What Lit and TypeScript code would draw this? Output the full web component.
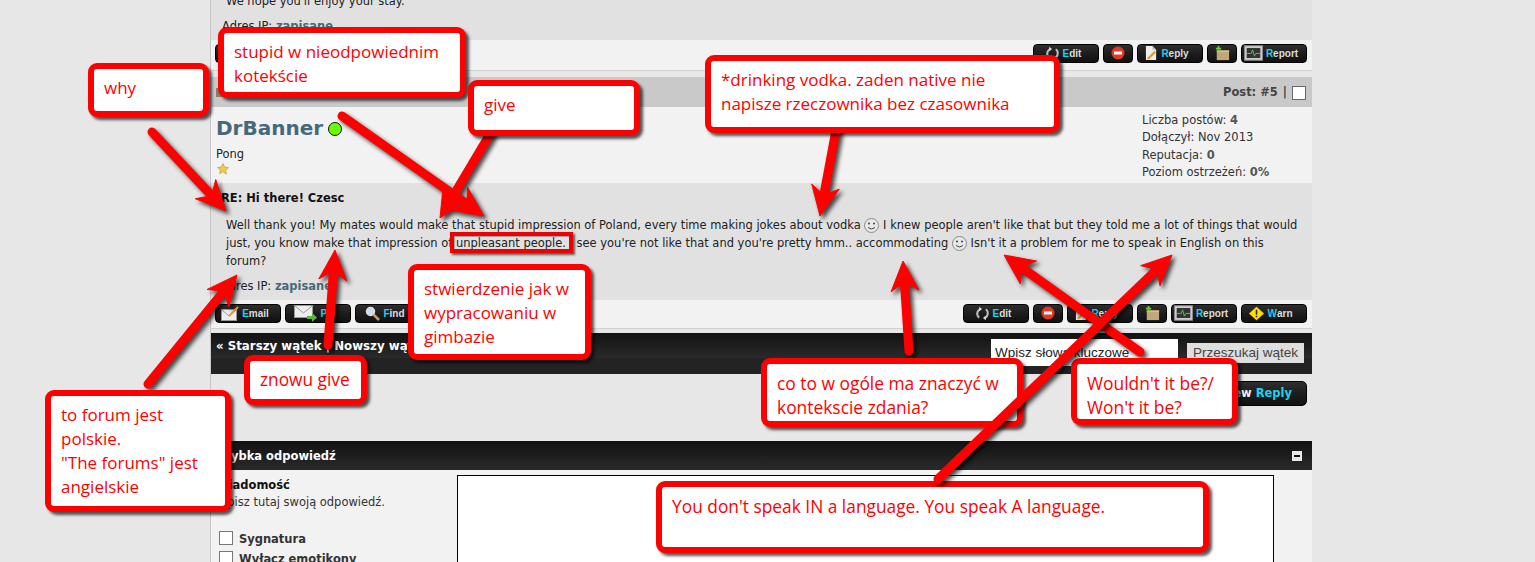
import { LitElement, html, css, svg } from "lit";
import { customElement } from "lit/decorators.js";

type Arrow = [number, number, number, number];
type Note = { x: number; y: number; w: number; h: number; fs?: number; lines: string[] };

const NOTES: Note[] = [
  { x: 88, y: 63, w: 121, h: 54, lines: ["why"] },
  { x: 218, y: 27, w: 248, h: 71, lines: ["stupid w nieodpowiednim", "kotekście"] },
  { x: 468, y: 80, w: 172, h: 56, lines: ["give"] },
  { x: 705, y: 55, w: 355, h: 78, lines: ["*drinking vodka. zaden native nie", "napisze rzeczownika bez czasownika"] },
  { x: 408, y: 264, w: 183, h: 96, lines: ["stwierdzenie jak w", "wypracowaniu w", "gimbazie"] },
  { x: 244, y: 355, w: 123, h: 50, fs: 17.3, lines: ["znowu give"] },
  { x: 45, y: 390, w: 186, h: 122, lines: ["to forum jest", "polskie.", "\"The forums\" jest", "angielskie"] },
  { x: 761, y: 358, w: 262, h: 69, fs: 17.4, lines: ["co to w ogóle ma znaczyć w", "kontekscie zdania?"] },
  { x: 1071, y: 358, w: 167, h: 67, fs: 17.4, lines: ["Wouldn't it be?/", "Won't it be?"] },
  { x: 656, y: 481, w: 553, h: 72, fs: 17.35, lines: ["You don't speak IN a language. You speak A language."] },
];

const UNDER: Arrow[] = [
  [152, 132, 226, 211],
  [490, 134, 440, 218],
  [342, 116, 484, 216],
  [836, 130, 820, 216],
  [328, 345, 335, 250],
  [148, 384, 237, 275],
  [909, 351, 903, 261],
  [1140, 352, 1004, 255],
];
const OVER: Arrow[] = [[938, 479, 1172, 255]];

function arrow([x1, y1, x2, y2]: Arrow) {
  const dx = x2 - x1;
  const dy = y2 - y1;
  const d = Math.hypot(dx, dy);
  const ux = dx / d;
  const uy = dy / d;
  const L = 30;
  const N = 21;
  const H = 14;
  const bx = x2 - ux * L;
  const by = y2 - uy * L;
  const nx = x2 - ux * N;
  const ny = y2 - uy * N;
  const pts = `${x2},${y2} ${bx - uy * H},${by + ux * H} ${nx},${ny} ${bx + uy * H},${by - ux * H}`;
  return svg`<g><line x1=${x1} y1=${y1} x2=${nx} y2=${ny} stroke="#f00" stroke-width="9" stroke-linecap="round"></line><polygon points=${pts} fill="#f00" stroke="#f00" stroke-width="1" stroke-linejoin="round"></polygon></g>`;
}

const I = {
  edit: html`<svg width="15" height="15" viewBox="0 0 18 16"><path d="M7 2.500A6 6 0 0 0 5 13M11 13.500A6 6 0 0 0 13 3" fill="none" stroke="#bbb" stroke-width="2.400"/><path d="M5 0l3.500 2.500L5 5zM13 16l-3.500-2.500L13 11z" fill="#ddd"/></svg>`,
  stop: html`<svg width="14" height="14" viewBox="0 0 14 14"><circle cx="7" cy="7" r="6.500" fill="#e8371f"/><rect x="3" y="5.500" width="8" height="3" fill="#fff"/></svg>`,
  reply: html`<svg width="13" height="16" viewBox="0 0 14 17"><path d="M1 1h7l4 4v11H1z" fill="#eee"/><path d="M8 1v4h4" fill="#bbb"/><path d="M3 15l8-8" stroke="#e8a020" stroke-width="2.500"/></svg>`,
  pkg: html`<svg width="15" height="15" viewBox="0 0 17 17"><path d="M2 5h14v11H2z" fill="#c2a878"/><path d="M2 5h14v2H2z" fill="#d6bd8e"/><path d="M4 0v6M1 3h6" stroke="#6c3" stroke-width="2"/></svg>`,
  report: html`<svg width="19" height="16" viewBox="0 0 21 17"><rect x=".5" y=".5" width="20" height="16" fill="#ccc" stroke="#888"/><rect x="3" y="3" width="15" height="11" fill="#333"/><path d="M3 9h5l1.500-4 2 7 1.500-3h5" fill="none" stroke="#5c5" stroke-width="1"/></svg>`,
  warn: html`<svg width="15" height="15" viewBox="0 0 20 18"><path d="M10 0l10 9-10 9L0 9z" fill="#fd0" stroke="#a80" stroke-width=".5"/><rect x="9" y="4" width="2" height="6.500" fill="#222"/><rect x="9" y="12" width="2" height="2" fill="#222"/></svg>`,
  email: html`<svg width="18" height="15" viewBox="0 0 18 15"><rect x=".5" y="3.500" width="15" height="11" fill="#eee" stroke="#999"/><path d="M1 4l7 6 7-6" fill="none" stroke="#999"/><path d="M8 10L17 1" stroke="#e8a020" stroke-width="2"/></svg>`,
  pm: html`<svg width="23" height="17" viewBox="0 0 23 17"><rect x=".5" y=".5" width="18" height="12" fill="#eee" stroke="#999"/><path d="M1 1l8.500 7L18 1" fill="none" stroke="#999"/><path d="M13 11h5V8l5 4.500-5 4.500v-3h-5z" fill="#5b3"/></svg>`,
  find: html`<svg width="15" height="15" viewBox="0 0 15 15"><circle cx="5.500" cy="5.500" r="4" fill="#cde" stroke="#ddd" stroke-width="1.500"/><path d="M8.500 8.500L14 14" stroke="#c96" stroke-width="2.500"/></svg>`,
  smile: html`<svg class="smile" width="15" height="15" viewBox="0 0 15 15"><circle cx="7.500" cy="7.500" r="7" fill="#e8e8e8" stroke="#8a8a8a"/><circle cx="5" cy="5.500" r="1" fill="#444"/><circle cx="10" cy="5.500" r="1" fill="#444"/><path d="M4 9.500q3.500 3 7 0" fill="none" stroke="#444"/></svg>`,
  star: html`<svg width="12" height="12" viewBox="0 0 12 12"><path d="M6 .5l1.700 3.600 3.800.5-2.800 2.700.7 3.900L6 8.800l-3.400 1.900.7-3.900L.5 4.600l3.800-.5z" fill="#f3c94a" stroke="#b8923a" stroke-width=".6"/></svg>`,
};

function btn(icon: unknown, label: string, extra = "") {
  return html`<span class="btn ${extra}">${icon}${label
    ? html`<span class="lbl"><b>${label[0]}</b>${label.slice(1)}</span>`
    : ""}</span>`;
}

@customElement("app-root")
export class AppRoot extends LitElement {
  static styles = css`
    :host {
      display: block;
      position: relative;
      width: 1535px;
      height: 562px;
      overflow: hidden;
      background: #e7e7e7;
      font-family: "DejaVu Sans", Verdana, sans-serif;
      font-size: 11.470px;
      color: #222;
    }
    .col {
      margin-left: 210px;
      width: 1102px;
      height: 562px;
      box-sizing: border-box;
      border-left: 1px solid #c6c6c6;
      overflow: hidden;
    }
    .top {
      height: 40px;
      background: #e1e1e1;
      overflow: hidden;
      padding-left: 15px;
    }
    .top p { margin: -6px 0 0; line-height: 14px; }
    .top .ip { margin: 11px 0 0 -4px; }
    .link { color: #44697a; font-weight: bold; }
    .actions {
      display: flex;
      align-items: center;
      justify-content: space-between;
      background: #f2f2f2;
      padding: 0 5px 0 4px;
      box-sizing: border-box;
    }
    .actions.a1 { height: 31px; border-bottom: 1px solid #d2d2d2; padding-bottom: 4px; }
    .actions.a2 { height: 29px; padding-bottom: 2px; border-bottom: 1px solid #d2d2d2;}
    .grp { display: flex; gap: 4px; }
    .btn {
      display: inline-flex;
      align-items: center;
      justify-content: center;
      gap: 3px;
      width: 66px;
      height: 19px;
      padding-right: 6px;
      box-sizing: border-box;
      background: linear-gradient(#2e2e2e, #1d1d1d 50%, #111);
      border: 1px solid #000;
      border-radius: 4px;
      color: #ddd;
      font: bold 10px "Liberation Sans", Arial, sans-serif;
    }
    .btn.sm { width: 30px; padding-right: 0; }
    .btn b { color: #1cd3ee; }
    .btn svg { flex: none; }
    .gap { height: 6px; }
    .head {
      height: 30px;
      background: #c9c9c9;
      display: flex;
      align-items: center;
      justify-content: space-between;
      padding: 0 6px 0 5px;
      box-sizing: border-box;
      font-weight: bold;
      color: #444;
    }
    .head .r { display: flex; align-items: center; gap: 5px; }
    .head .chk { width: 12px; height: 12px; background: #fff; border: 1px solid #666; margin-top: 2px; }
    .mini { width: 9px; height: 9px; background: #8a7a68; }
    .user {
      height: 76px;
      background: #f2f2f2;
      display: flex;
      justify-content: space-between;
      padding: 9px 0 0 5px;
      box-sizing: border-box;
    }
    .name {
      display: flex;
      align-items: center;
      gap: 5px;
      font-size: 20px;
      font-weight: bold;
      color: #44697a;
      line-height: 24px;
    }
    .dot { width: 12px; height: 12px; border-radius: 50%; background: #6f0; border: 1px solid #111; margin-top: 1px; }
    .rank { margin-top: 7px; line-height: 14px; }
    .stars { display: block; height: 12px; margin: 2px 0 0 1px; }
    .stats { width: 170px; margin-top: -4px; line-height: 17.400px; color: #333; }
    .stats b { color: #555; }
    .body {
      height: 117px;
      background: #e1e1e1;
      padding: 8px 0 0 10px;
      box-sizing: border-box;
    }
    .title { font-weight: bold; line-height: 14px; color: #111; }
    .text { margin: 11px 0 0 5px; line-height: 18px; width: 1075px; color: #222; }
    .smile { vertical-align: -4px; }
    .ip2 { margin-top: 8px; line-height: 16px; }
    .bar {
      margin-top: 4px;
      height: 41px;
      background: linear-gradient(#121212, #2a2a2a 62%, #232323 62%);
      display: flex;
      align-items: flex-start;
      justify-content: space-between;
      padding: 0 8px 0 5px;
      box-sizing: border-box;
      color: #fff;
      font-weight: bold;
      font-size: 11.800px;
    }
    .bar .nav { margin-top: 6px; line-height: 14px; }
    .search { display: flex; gap: 9px; font: 13.500px "Liberation Sans", Arial, sans-serif; }
    .kw { margin-top: 6px; width: 187px; height: 27px; padding-left: 4px; box-sizing: border-box; background: #fff; color: #222; line-height: 28px; }
    .sb { margin-top: 10px; width: 117px; height: 20px; background: #dfdfdf; color: #444; text-align: center; line-height: 20px; }
    .nr { display: flex; justify-content: flex-end; padding: 7px 5px 0 0; height: 60px; box-sizing: border-box; }
    .nrb {
      width: 92px;
      height: 25px;
      box-sizing: border-box;
      background: linear-gradient(#2e2e2e, #1d1d1d 50%, #111);
      border: 1px solid #000;
      border-radius: 5px;
      color: #eee;
      font-weight: bold;
      font-size: 11.500px;
      line-height: 23px;
      text-align: right;
      padding-right: 14px;
    }
    .nrb b { color: #1cd3ee; }
    .qh {
      margin-top: 7px;
      height: 29px;
      background: linear-gradient(#121212, #2a2a2a);
      color: #fff;
      font-weight: bold;
      font-size: 11.500px;
      display: flex;
      align-items: center;
      justify-content: space-between;
      padding: 0 10px 0 5px;
      box-sizing: border-box;
    }
    .qmin { width: 10px; height: 10px; background: #e8e8e8; display: flex; align-items: center; justify-content: center; }
    .qmin i { display: block; width: 6px; height: 2px; background: #111; }
    .qb { display: flex; height: 100px; background: #f2f2f2; padding: 5px 0 0 5px; box-sizing: border-box; }
    .ql { width: 241px; padding-top: 2px; }
    .ql strong { display: block; line-height: 16px; color: #111; }
    .ql div { line-height: 18px; color: #333; }
    .cb { display: flex; align-items: center; gap: 6px; margin: 0 0 0 3px; height: 20px; font-weight: bold; color: #111; }
    .cbs { margin-top: 18px; }
    .cb i { display: block; width: 12px; height: 12px; border: 1px solid #777; background: #fff; margin-top: -2px; }
    .ta { width: 817px; height: 100px; border: 1px solid #000; background: #fff; box-sizing: border-box; }

    .unp { position: absolute; left: 450px; top: 232px; width: 123px; height: 21px; box-sizing: border-box; border: 4px solid #e00; box-shadow: 2px 2px 2px rgba(0,0,0,.6), inset 1px 1px 1px rgba(0,0,0,.3); }
    .ov { position: absolute; left: 0; top: 0; pointer-events: none; filter: drop-shadow(3px 3px 2px rgba(0,0,0,.7)); }
    .note {
      position: absolute;
      box-sizing: border-box;
      border: 6px solid #f00;
      border-radius: 9px;
      background: #fff;
      box-shadow: 3px 3px 3px rgba(0,0,0,.65);
      padding: 7px 10px;
      color: #f00;
      font: 17px/24px "Open Sans", sans-serif;
      white-space: nowrap;
    }
  `;

  render() {
    return html`
      <div class="col">
        <div class="top"><p>We hope you'll enjoy your stay.</p><p class="ip">Adres IP: <span class="link">zapisane</span></p></div>
        <div class="actions a1">
          <div class="grp">${btn(I.email, "Email")}</div>
          <div class="grp">${btn(I.edit, "Edit")}${btn(I.stop, "", "sm")}${btn(I.reply, "Reply")}${btn(I.pkg, "", "sm")}${btn(I.report, "Report")}</div>
        </div>
        <div class="gap"></div>
        <div class="head"><span class="mini"></span><span class="r">Post: #5 <span>|</span> <span class="chk"></span></span></div>
        <div class="user">
          <div>
            <div class="name">DrBanner<span class="dot"></span></div>
            <div class="rank">Pong</div>
            <span class="stars">${I.star}</span>
          </div>
          <div class="stats">
            Liczba postów: <b>4</b><br />Dołączył: Nov 2013<br />Reputacja: <b>0</b><br />Poziom ostrzeżeń: <b>0%</b>
          </div>
        </div>
        <div class="body">
          <div class="title">RE: Hi there! Czesc</div>
          <div class="text">
            Well thank you! My mates would make that stupid impression of Poland, every time making jokes about vodka ${I.smile} I knew people aren't like that but they told me a lot of things that would just, you know make that impression of unpleasant people. I see you're not like that and you're pretty hmm.. accommodating ${I.smile} Isn't it a problem for me to speak in English on this forum?
          </div>
          <div class="ip2">Adres IP: <span class="link">zapisane</span></div>
        </div>
        <div class="actions a2">
          <div class="grp">${btn(I.email, "Email")}${btn(I.pm, "PM")}${btn(I.find, "Find")}</div>
          <div class="grp">${btn(I.edit, "Edit")}${btn(I.stop, "", "sm")}${btn(I.reply, "Reply")}${btn(I.pkg, "", "sm")}${btn(I.report, "Report")}${btn(I.warn, "Warn")}</div>
        </div>
        <div class="bar">
          <div class="nav">« Starszy wątek | Nowszy wątek »</div>
          <div class="search"><div class="kw">Wpisz słowa kluczowe</div><div class="sb">Przeszukaj wątek</div></div>
        </div>
        <div class="nr"><div class="nrb">New <b>Reply</b></div></div>
        <div class="qh"><span>Szybka odpowiedź</span><span class="qmin"><i></i></span></div>
        <div class="qb">
          <div class="ql">
            <strong>Wiadomość</strong>
            <div>Wpisz tutaj swoją odpowiedź.</div>
            <div class="cb cbs"><i></i>Sygnatura</div>
            <div class="cb"><i></i>Wyłącz emotikony</div>
          </div>
          <div class="ta"></div>
        </div>
      </div>
      <div class="unp"></div>
      <svg class="ov" width="1535" height="562">${UNDER.map(arrow)}</svg>
      ${NOTES.map(
        (n) => html`<div class="note" style="left:${n.x}px;top:${n.y}px;width:${n.w}px;height:${n.h}px;${n.fs ? `font-size:${n.fs}px` : ""}">${n.lines.map((l, i) => html`${i ? html`<br />` : ""}${l}`)}</div>`
      )}
      <svg class="ov" width="1535" height="562">${OVER.map(arrow)}</svg>
    `;
  }
}
